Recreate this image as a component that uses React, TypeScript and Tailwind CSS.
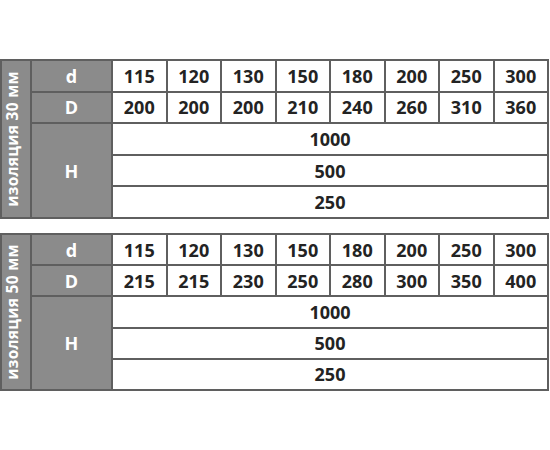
const sizes = ["115", "120", "130", "150", "180", "200", "250", "300"];

const tables = [
  { label: "изоляция 30 мм", D: ["200", "200", "200", "210", "240", "260", "310", "360"], rowH: "h-[31.6px]" },
  { label: "изоляция 50 мм", D: ["215", "215", "230", "250", "280", "300", "350", "400"], rowH: "h-[31.2px]" },
];

const cell = "border-2 border-[#5f5f5f] p-0 text-center";
const gray = "bg-[#8b8b8b] text-white";

function SpecTable({ label, D, rowH }: { label: string; D: string[]; rowH: string }) {
  return (
    <table className="w-[549px] table-fixed border-collapse text-[18px] font-bold leading-none text-[#232323]">
      <colgroup>
        <col className="w-[30px]" />
        <col className="w-[81px]" />
        {sizes.map((s) => (
          <col key={s} />
        ))}
      </colgroup>
      <tbody>
        <tr className={rowH}>
          <td rowSpan={5} className={`${cell} ${gray}`}>
            <div className="mx-auto rotate-180 whitespace-nowrap text-[15.5px] leading-[1.35] tracking-[0.3px] [writing-mode:vertical-rl]">
              {label}
            </div>
          </td>
          <td className={`${cell} ${gray}`}>d</td>
          {sizes.map((s) => (
            <td key={s} className={cell}>
              {s}
            </td>
          ))}
        </tr>
        <tr className={rowH}>
          <td className={`${cell} ${gray}`}>D</td>
          {D.map((s, i) => (
            <td key={i} className={cell}>
              {s}
            </td>
          ))}
        </tr>
        <tr className={rowH}>
          <td rowSpan={3} className={`${cell} ${gray}`}>
            H
          </td>
          <td colSpan={8} className={cell}>
            1000
          </td>
        </tr>
        <tr className={rowH}>
          <td colSpan={8} className={cell}>
            500
          </td>
        </tr>
        <tr className={rowH}>
          <td colSpan={8} className={cell}>
            250
          </td>
        </tr>
      </tbody>
    </table>
  );
}

export default function App() {
  return (
    <div className="h-[450px] w-[550px] bg-white pt-[59px] font-['Open_Sans',sans-serif]">
      <div className="flex flex-col gap-[14px]">
        {tables.map((t) => (
          <SpecTable key={t.label} {...t} />
        ))}
      </div>
    </div>
  );
}
